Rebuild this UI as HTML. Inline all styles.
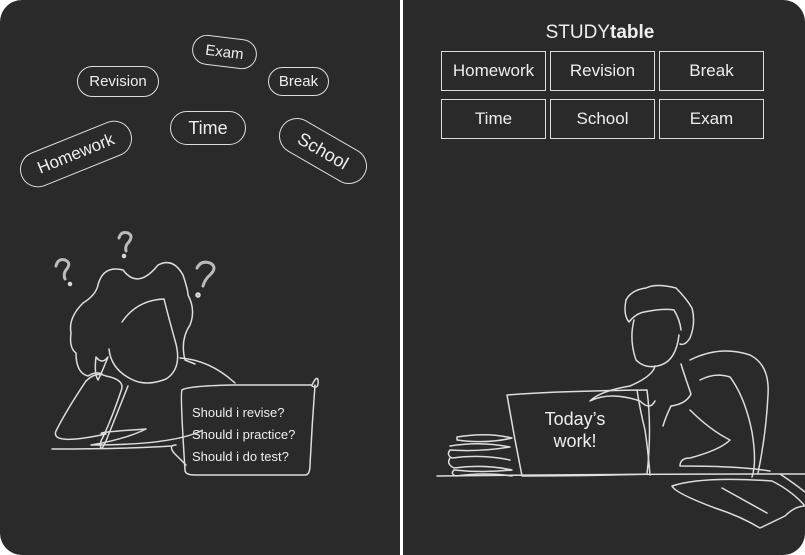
<!DOCTYPE html>
<html><head><meta charset="utf-8"><style>
html,body{margin:0;padding:0;background:#fff;width:805px;height:555px;overflow:hidden}
body{position:relative;font-family:"Liberation Sans",sans-serif;color:#eee}
.pl{position:absolute;top:0;left:0;width:400px;height:555px;background:#2a2a2a;border-radius:22px 0 0 22px}
.pr{position:absolute;top:0;left:403px;width:402px;height:555px;background:#2a2a2a;border-radius:0 22px 22px 0}
.pill{position:absolute;border:1.5px solid #ddd;border-radius:20px;display:flex;align-items:center;justify-content:center;font-size:15px;box-sizing:border-box}
.cell{position:absolute;border:1.5px solid #ddd;box-sizing:border-box;width:105px;height:40px;display:flex;align-items:center;justify-content:center;font-size:17px}
svg{position:absolute;left:0;top:0}
</style></head><body>
<div class="pl"></div><div class="pr"></div>
<div class="pill" style="left:192px;top:37px;width:65px;height:30px;transform:rotate(7deg);font-size:15px">Exam</div>
<div class="pill" style="left:77px;top:66px;width:82px;height:31px">Revision</div>
<div class="pill" style="left:268px;top:67px;width:61px;height:29px">Break</div>
<div class="pill" style="left:170px;top:111px;width:76px;height:34px;font-size:18px">Time</div>
<div class="pill" style="left:17px;top:136px;width:118px;height:36px;transform:rotate(-22deg);font-size:17px">Homework</div>
<div class="pill" style="left:275px;top:133px;width:96px;height:36px;transform:rotate(30deg);font-size:18px">School</div>
<div style="position:absolute;left:500px;top:22px;width:200px;text-align:center;font-size:19px">STUDY<b>table</b></div>
<div class="cell" style="left:441px;top:51px">Homework</div>
<div class="cell" style="left:550px;top:51px">Revision</div>
<div class="cell" style="left:659px;top:51px">Break</div>
<div class="cell" style="left:441px;top:99px">Time</div>
<div class="cell" style="left:550px;top:99px">School</div>
<div class="cell" style="left:659px;top:99px">Exam</div>
<svg width="805" height="555" fill="none" stroke="#ddd" stroke-width="1.5" stroke-linecap="round" stroke-linejoin="round">
<g stroke="#bbb" stroke-width="3">
<path d="M56 266 q2-8 9-6 q7 3 1 10 q-3 4-1 9"/><path d="M119 238 q2-7 9-5 q6 3 0 10 q-3 3-2 8"/><path d="M197 268 q4-8 13-5 q8 4 0 12 q-5 4-7 11"/>
</g>
<circle cx="70" cy="284" r="1.5" fill="#bbb"/><circle cx="124" cy="256" r="1.5" fill="#bbb"/><circle cx="198" cy="295" r="2" fill="#bbb"/>
<path d="M98 285 q5-20 25-15 q15 20 35-5 q15-8 25 10 q5 15 5 20 q8 15 2 30 q-10 15-5 35 l10 4"/>
<path d="M98 285 q-2 10-15 18 q-15 15-12 30 q-2 15 5 20 q0 20 12 23 q8-5 14-2"/>
<path d="M122 322 q15-22 42-23 q5 20 12 45 q6 25-10 35 q-20 8-35 0 q-20-10-22-30"/>
<path d="M96 357 q6 8 12 0 q-6 15-10 23 q-4-6 -2-23z"/>
<path d="M86 381 q10-10 20-5 q20 4 15 15 q-10 30-20 50 q-2 15 5 0 l22-55"/>
<path d="M86 381 q-20 30-30 50 q-6 15 50 3 q-20-1 40-5 q-20 10-55 16 q80 0 110-14"/>
<path d="M52 449 q70 0 120-3"/>
<path d="M182 390 q5-4 50-5 q40 0 80 0 q5-10 6-5 q1 10-6 6"/>
<path d="M182 390 q-2 3 3 80 q0 5 10 5 h110 q5 0 5-10 q2-40 5-80"/>
<path d="M186 465 l-12-12 q-6-8 2-8"/>
<path d="M180 358 q30 2 55 25"/>
<path d="M626 300 q5-10 20-12 q10-5 30 0 q10 10 16 20 q4 15-2 30 q-5 8-10 6"/>
<path d="M626 300 q-3 15 3 22 q6-8 15-10 q20-4 30-2 q6 10 7 20"/>
<path d="M634 320 q-5 20 2 40 q10 10 25 5 q15-5 18-30"/>
<path d="M681 364 q3 10 10 30 q-5 10-20 12 q-5 10-8 20"/>
<path d="M655 366 q-2 10-25 20 q-30 5-40 15 q20-10 50 0 q10 10 15 0"/>
<path d="M690 360 q30-15 60-5 q20 10 18 40 q-2 40-10 78"/>
<path d="M700 380 q15-8 30-3 q15 20 22 55 q5 30 0 45"/>
<path d="M690 410 q20 20 40 30 q-10 10-40 18 q-10 0-10 8 q60 0 90 5"/>
<path d="M637 390 q3 20 8 40 q3 20 5 45"/>
<path d="M507 395 q50-4 140-5 q5 40 0 84 q-60 2-125 2 q-8-40-15-81z"/>
<path d="M437 476 q180-2 368-2"/>
<path d="M457 437 q30-5 55 1 q-25 6-55 2z"/>
<path d="M450 446 q30-5 60 1 q-30 5-60 3q-4 5 2 8 q30 -4 58 2"/>
<path d="M450 458 q-4 6 4 10 q30-4 58 2 q-30 3-58 0 q-4 4 2 6 q30-4 56 0"/>
<path d="M672 486 q30-10 100-5 q20 10 33 25 q-10 0-20 10 l-25 12 q-20-12-45-20 q-40-15-43-22z"/>
<path d="M722 488 l45 25"/>
<path d="M780 474 q15 10 25 18"/>
</svg>
<div style="position:absolute;left:192px;top:402px;font-size:13px;line-height:22px">Should i revise?<br>Should i practice?<br>Should i do test?</div>
<div style="position:absolute;left:510px;top:408px;width:130px;text-align:center;font-size:18px;line-height:22px">Today’s<br>work!</div>
</body></html>
